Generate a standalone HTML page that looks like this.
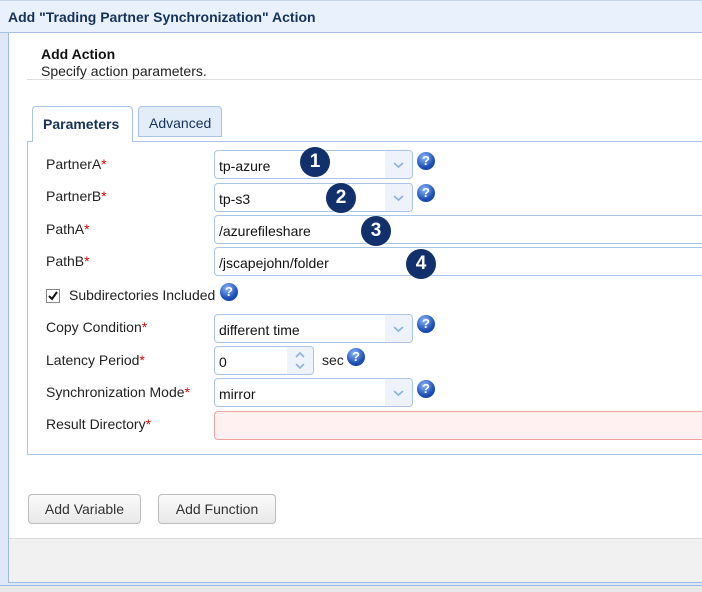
<!DOCTYPE html>
<html><head><meta charset="utf-8"><style>
*{box-sizing:border-box;margin:0;padding:0}
body{width:702px;height:592px;overflow:hidden;background:#dfe8f6;font-family:"Liberation Sans",Arial,sans-serif;font-size:14px;color:#222;position:relative}
.a{position:absolute}
.hdr{left:0;top:0;width:702px;height:33px;background:#e9f1fc;border-bottom:1px solid #a7c1e6;border-top:1px solid #c8d6ea}
.hdr span{position:absolute;left:8px;top:8px;font-weight:bold;font-size:14px;color:#15325a}
.panel{left:8px;top:33px;width:700px;height:550px;background:#fff;border-left:1px solid #99bbe8;border-bottom:1px solid #99bbe8}
.foot{left:9px;top:538px;width:693px;height:44px;background:#f1f1f1;border-top:1px solid #ddd}
.lbl{font-size:14px;color:#222}
.req{color:#d00}
.inp{background:#fff;border:1px solid #a9c4e6;border-radius:4px;height:29px;font-size:14px;padding:7px 0 0 4px;color:#111}
.sel .dd{position:absolute;right:0;top:0;width:27px;height:27px;background:#eef3fb;border-radius:0 4px 4px 0}
.num{width:30px;height:30px;border-radius:50%;background:#12306b;color:#fff;font-weight:bold;font-size:19px;text-align:center;line-height:30px;box-shadow:0 0 2px #fff}
.q{width:18px;height:18px;border-radius:50%;background:radial-gradient(circle at 40% 30%,#8ab8ff,#1d4fb8 60%,#123a8a);color:#fff;font-weight:bold;font-size:13px;text-align:center;line-height:18px}
.btn{height:30px;border:1px solid #bbb;border-radius:4px;background:linear-gradient(#fbfbfb,#e8e8e8);font-size:14px;color:#333;text-align:center;line-height:28px}
</style></head><body>
<div class="a hdr"><span>Add "Trading Partner Synchronization" Action</span></div>
<div class="a panel"></div>
<div class="a" style="left:41px;top:46px;font-weight:bold;font-size:14px;color:#111">Add Action</div>
<div class="a" style="left:41px;top:63px;font-size:14px;color:#222">Specify action parameters.</div>
<div class="a" style="left:27px;top:79px;width:675px;border-top:1px solid #ddd"></div>
<div class="a" style="left:27px;top:141px;width:680px;height:314px;border:1px solid #a9c4e6;border-right:none"></div>
<div class="a" style="left:32px;top:106px;width:101px;height:36px;border:1px solid #a9c4e6;border-bottom:none;border-radius:4px 4px 0 0;background:#fff;font-weight:bold;color:#15325a;padding:9px 0 0 10px">Parameters</div>
<div class="a" style="left:138px;top:106px;width:84px;height:31px;border:1px solid #a9c4e6;border-radius:4px 4px 0 0;background:#e3edfa;color:#15325a;padding:8px 0 0 10px">Advanced</div>

<div class="a lbl" style="left:46px;top:156px">PartnerA<span class="req">*</span></div>
<div class="a inp sel" style="left:214px;top:150px;width:199px">tp-azure<div class="dd"><svg width="27" height="27"><path d="M9 12l4.5 4 4.5-4" fill="none" stroke="#8ab0e0" stroke-width="1.6"/></svg></div></div>
<div class="a q" style="left:417px;top:152px">?</div>
<div class="a num" style="left:300px;top:147px">1</div>

<div class="a lbl" style="left:46px;top:188px">PartnerB<span class="req">*</span></div>
<div class="a inp sel" style="left:214px;top:183px;width:199px">tp-s3<div class="dd"><svg width="27" height="27"><path d="M9 12l4.5 4 4.5-4" fill="none" stroke="#8ab0e0" stroke-width="1.6"/></svg></div></div>
<div class="a q" style="left:417px;top:184px">?</div>
<div class="a num" style="left:326px;top:183px">2</div>

<div class="a lbl" style="left:46px;top:221px">PathA<span class="req">*</span></div>
<div class="a inp" style="left:214px;top:215px;width:500px">/azurefileshare</div>
<div class="a num" style="left:361px;top:216px">3</div>

<div class="a lbl" style="left:46px;top:253px">PathB<span class="req">*</span></div>
<div class="a inp" style="left:214px;top:247px;width:500px">/jscapejohn/folder</div>
<div class="a num" style="left:406px;top:249px">4</div>

<div class="a" style="left:46px;top:289px;width:14px;height:14px;border:1px solid #888;background:#fff"><svg width="12" height="12" style="position:absolute;left:0;top:0"><path d="M2 6l3 3 5-7" fill="none" stroke="#111" stroke-width="2"/></svg></div>
<div class="a lbl" style="left:69px;top:287px">Subdirectories Included</div>
<div class="a q" style="left:220px;top:283px">?</div>

<div class="a lbl" style="left:46px;top:319px">Copy Condition<span class="req">*</span></div>
<div class="a inp sel" style="left:214px;top:314px;width:199px">different time<div class="dd"><svg width="27" height="27"><path d="M9 12l4.5 4 4.5-4" fill="none" stroke="#8ab0e0" stroke-width="1.6"/></svg></div></div>
<div class="a q" style="left:417px;top:315px">?</div>

<div class="a lbl" style="left:46px;top:352px">Latency Period<span class="req">*</span></div>
<div class="a inp" style="left:214px;top:346px;width:100px">0<div style="position:absolute;right:0;top:0;width:26px;height:27px;background:#eef3fb;border-radius:0 4px 4px 0"><svg width="26" height="27"><path d="M9 10l4-4 4 4M9 17l4 4 4-4" fill="none" stroke="#8ab0e0" stroke-width="1.6"/></svg></div></div>
<div class="a lbl" style="left:322px;top:352px">sec</div>
<div class="a q" style="left:347px;top:348px">?</div>

<div class="a lbl" style="left:46px;top:384px">Synchronization Mode<span class="req">*</span></div>
<div class="a inp sel" style="left:214px;top:378px;width:199px">mirror<div class="dd"><svg width="27" height="27"><path d="M9 12l4.5 4 4.5-4" fill="none" stroke="#8ab0e0" stroke-width="1.6"/></svg></div></div>
<div class="a q" style="left:417px;top:380px">?</div>

<div class="a lbl" style="left:46px;top:416px">Result Directory<span class="req">*</span></div>
<div class="a" style="left:214px;top:411px;width:500px;height:29px;border:1px solid #f0a0a0;border-radius:4px;background:#fff1f1"></div>

<div class="a btn" style="left:28px;top:494px;width:113px">Add Variable</div>
<div class="a btn" style="left:158px;top:494px;width:118px">Add Function</div>

<div class="a foot"></div>
<div class="a" style="left:0;top:585px;width:702px;height:7px;background:#e8e8e8;border-top:1px solid #99bbe8"></div>
</body></html>
